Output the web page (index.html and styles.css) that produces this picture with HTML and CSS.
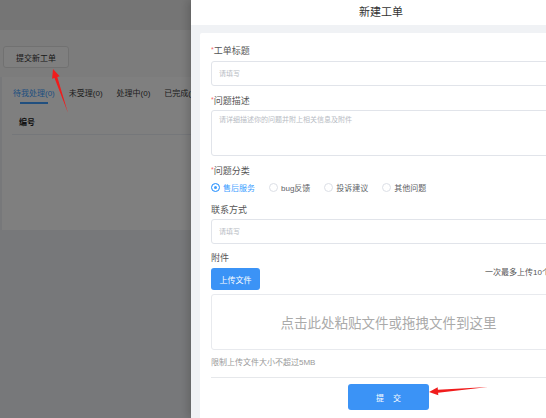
FILE: index.html
```html
<!DOCTYPE html>
<html lang="zh-CN">
<head>
<meta charset="utf-8">
<title>新建工单</title>
<link rel="stylesheet" href="styles.css">
</head>
<body>
<div class="app">
  <div class="topbar"></div>
  <div class="toolbar"><button class="btn-new" type="button">提交新工单</button></div>
  <div class="list-card">
    <div class="tabs">
      <span class="tab active">待我处理(0)</span>
      <span class="tab">未受理(0)</span>
      <span class="tab">处理中(0)</span>
      <span class="tab">已完成(0)</span>
    </div>
    <div class="thead"><span>编号</span></div>
  </div>
</div>
<div class="mask"></div>
<aside class="drawer">
  <div class="drawer-header">新建工单</div>
  <div class="drawer-body">
    <form class="form-card">
      <label class="label label-first"><span class="req">*</span>工单标题</label>
      <input class="input input-a" type="text" placeholder="请填写">
      <label class="label label-b"><span class="req">*</span>问题描述</label>
      <textarea class="textarea" placeholder="请详细描述你的问题并附上相关信息及附件"></textarea>
      <label class="label label-b"><span class="req">*</span>问题分类</label>
      <div class="radios">
        <span class="radio checked"><span class="dot"></span>售后服务</span>
        <span class="radio"><span class="dot"></span>bug反馈</span>
        <span class="radio"><span class="dot"></span>投诉建议</span>
        <span class="radio"><span class="dot"></span>其他问题</span>
      </div>
      <label class="label label-d">联系方式</label>
      <input class="input input-b" type="text" placeholder="请填写">
      <label class="label label-e">附件</label>
      <div class="upload-row">
        <button class="btn-upload" type="button">上传文件</button>
        <span class="upload-tip">一次最多上传10个文件</span>
      </div>
      <div class="dropzone">点击此处粘贴文件或拖拽文件到这里</div>
      <div class="limit">限制上传文件大小不超过5MB</div>
      <div class="divider"></div>
      <div class="submit-row">
        <button class="btn-submit" type="button"><span>提</span><span>交</span></button>
      </div>
    </form>
  </div>
</aside>
<svg class="annot" width="546" height="418" viewBox="0 0 546 418">
  <polygon fill="#f01c1c" points="68,113 57.3,77 59.7,76.2 53,69 52.1,78.8 54.5,78"/>
  <polygon fill="#f01c1c" points="488,387 437.9,389.7 437.7,387.2 429,392 438.3,395.2 438.1,392.7"/>
</svg>
</body>
</html>
```

FILE: styles.css
```css
* { box-sizing: border-box; }
html, body { margin: 0; padding: 0; }
body {
  width: 546px;
  height: 418px;
  overflow: hidden;
  background: #eff1f4;
  font-family: "Liberation Sans", "Noto Sans CJK SC", sans-serif;
  color: #303133;
}
.app { display: flex; flex-direction: column; width: 546px; }
.topbar { height: 30px; background: #ebebeb; }
.toolbar { height: 47px; background: #f8f8f8; padding: 16px 0 0 3px; }
.btn-new {
  width: 66px; height: 22px; padding: 0;
  background: #fff; border: 1px solid #e3e3e3; border-radius: 3px;
  font-family: inherit; font-size: 8px; color: #333;
}
.list-card { margin-left: 2px; height: 153px; background: #fff; }
.tabs { display: flex; gap: 14px; padding: 12px 0 0 11px; }
.tab {
  display: flex; flex-direction: column; align-items: center;
  font-size: 8px; line-height: 10px; color: #3a3a3a;
}
.tab::after { content: ""; display: block; width: 28px; height: 2px; margin-top: 3px; }
.tab.active { color: #409eff; }
.tab.active::after { background: #409eff; }
.thead {
  margin: 14px 10px 0; padding: 0 0 6px 7px;
  font-size: 8px; line-height: 10px; font-weight: bold; color: #222;
  border-bottom: 1px solid #ebeef5;
}
.mask { position: fixed; inset: 0; background: rgba(0, 0, 0, 0.5); }
.drawer {
  position: fixed; top: 0; left: 191px; width: 395px; height: 418px;
  background: #f0f2f5;
  box-shadow: -3px 0 8px rgba(0, 0, 0, 0.18);
  display: flex; flex-direction: column;
}
.drawer-header {
  height: 25px; line-height: 25px; background: #fff;
  text-align: center; padding-right: 15px;
  font-size: 11px; color: #333;
}
.drawer-body { padding: 8px 9px; }
.form-card {
  background: #fff; border-radius: 2px; padding: 12px 11px 20px;
  display: flex; flex-direction: column;
}
.label { display: block; font-size: 9px; line-height: 12px; color: #555; }
.req { color: #f56c6c; font-size: 7px; vertical-align: top; line-height: 9px; }
.label-b { margin-top: 9px; }
.label-d { margin-top: 11px; }
.label-e { margin-top: 8px; }
.input, .textarea {
  display: block; width: 100%;
  border: 1px solid #e1e4ea; border-radius: 3px;
  font-family: inherit; font-size: 7px; color: #333;
  padding: 0 7px; outline: none; background: #fff;
}
.input { height: 25px; }
.input-a { margin-top: 4px; }
.input-b { margin-top: 3px; }
.textarea { margin-top: 3px; height: 46px; padding-top: 4px; resize: none; line-height: 10px; }
.input::placeholder, .textarea::placeholder { color: #b8bcc4; }
.radios { display: flex; margin-top: 4px; height: 12px; align-items: center; }
.radio {
  display: flex; align-items: center; gap: 3px;
  margin-right: 14px; font-size: 8px; color: #606266;
}
.dot {
  width: 9px; height: 9px; border-radius: 50%;
  border: 1px solid #dcdfe6; background: #fff;
}
.radio.checked { color: #409eff; }
.radio.checked .dot { border-color: #409eff; background: #409eff; box-shadow: inset 0 0 0 2px #fff; }
.upload-row { display: flex; justify-content: space-between; align-items: flex-start; margin-top: 4px; }
.btn-upload {
  width: 49px; height: 22px; padding: 0;
  background: #3b93f6; border: none; border-radius: 3px;
  color: #fff; font-family: inherit; font-size: 8px;
}
.upload-tip { font-size: 8px; line-height: 10px; color: #555; white-space: nowrap; }
.dropzone {
  margin-top: 4px; height: 56px;
  border: 1px solid #e8eaee; border-radius: 3px;
  display: flex; align-items: center; justify-content: center;
  font-size: 13.5px; color: #aaa;
}
.limit { margin-top: 7px; font-size: 8px; line-height: 12px; color: #999; }
.divider { margin-top: 8px; height: 1px; background: #e6e8eb; }
.submit-row { display: flex; justify-content: center; margin-top: 6px; }
.btn-submit {
  width: 81px; height: 26px; padding: 0;
  background: #3b93f6; border: none; border-radius: 3px;
  color: #fff; font-family: inherit; font-size: 8px;
  display: flex; align-items: center; justify-content: center; gap: 9px;
}
.annot { position: fixed; top: 0; left: 0; pointer-events: none; }
```
